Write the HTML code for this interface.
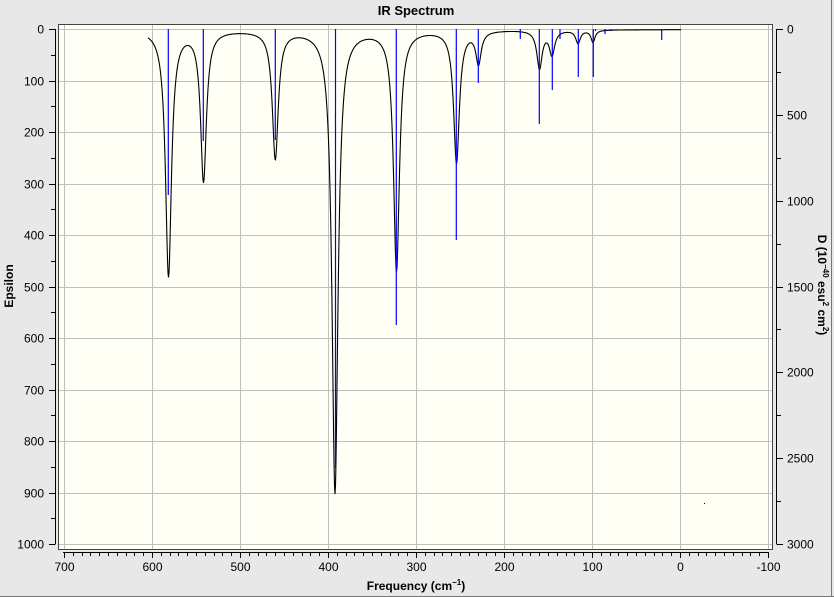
<!DOCTYPE html>
<html><head><meta charset="utf-8"><style>
html,body{margin:0;padding:0;width:834px;height:597px;overflow:hidden;background:#e8e8e8;font-family:"Liberation Sans",sans-serif;}
svg{position:absolute;left:0;top:0;}
</style></head><body>
<svg id="s" width="834" height="597" xmlns="http://www.w3.org/2000/svg" font-family="Liberation Sans, sans-serif">
<rect x="0" y="0" width="834" height="597" fill="#e8e8e8"/>
<line x1="831.5" y1="0" x2="831.5" y2="597" stroke="#777" stroke-width="1"/>
<line x1="0" y1="596.5" x2="834" y2="596.5" stroke="#777" stroke-width="1"/>
<rect x="58.5" y="24.5" width="714" height="525" fill="#fffff5" stroke="#444" stroke-width="1"/>
<g id="grid" stroke="#c0c0c0" stroke-width="1"></g>
<g id="axes" stroke="#000" stroke-width="1"></g>
<g id="labels" font-size="12" fill="#000"></g>
<path id="curve" fill="none" stroke="#000" stroke-width="1.1"/>
<g id="sticks" stroke="#0000ff" stroke-width="1.2"></g>
<text x="416" y="15" font-size="13" font-weight="bold" text-anchor="middle">IR Spectrum</text>
<text x="416" y="590" font-size="12" font-weight="bold" text-anchor="middle">Frequency (cm<tspan dy="-5" font-size="8">−1</tspan><tspan dy="5">)</tspan></text>
<text transform="translate(13,286) rotate(-90)" font-size="12" font-weight="bold" text-anchor="middle">Epsilon</text>
<text transform="translate(818,285) rotate(90)" font-size="12" font-weight="bold" text-anchor="middle">D (10<tspan dy="-5" font-size="8">−40</tspan><tspan dy="5"> esu</tspan><tspan dy="-5" font-size="8">2</tspan><tspan dy="5"> cm</tspan><tspan dy="-5" font-size="8">2</tspan><tspan dy="5">)</tspan></text>
<line x1="704" y1="503.5" x2="705" y2="503.5" stroke="#000"/>
</svg>
<script>
var NS="http://www.w3.org/2000/svg";
function el(p,t,a,txt){var e=document.createElementNS(NS,t);for(var k in a)e.setAttribute(k,a[k]);if(txt!=null)e.textContent=txt;document.getElementById(p).appendChild(e);return e;}
function fx(f){return 680-f*0.88;}
function ey(v){return 29+v*0.515;}
for(var f=700;f>=-100;f-=100){var x=Math.round(fx(f))+0.5;el("grid","line",{x1:x,y1:25,x2:x,y2:549});}
for(var v=0;v<=1000;v+=100){var y=Math.round(ey(v))+0.5;el("grid","line",{x1:59,y1:y,x2:772,y2:y});}
el("axes","line",{x1:55.5,y1:29,x2:55.5,y2:544});
for(var v=0;v<=1000;v+=50){var y=Math.round(ey(v))+0.5;el("axes","line",{x1:(v%100?51:49),y1:y,x2:55.5,y2:y});
 if(v%100==0)el("labels","text",{x:44,y:y+4,"text-anchor":"end"},String(v));}
el("axes","line",{x1:776.5,y1:29,x2:776.5,y2:544});
for(var d=0;d<=3000;d+=250){var y=Math.round(29+d*515/3000)+0.5;el("axes","line",{x1:776.5,y1:y,x2:(d%500?781:783),y2:y});
 if(d%500==0)el("labels","text",{x:787,y:y+4},String(d));}
el("axes","line",{x1:63,y1:552.5,x2:769,y2:552.5});
for(var f=700;f>=-100;f-=10){var x=Math.round(fx(f))+0.5;el("axes","line",{x1:x,y1:552.5,x2:x,y2:(f%100?556:558)});
 if(f%100==0)el("labels","text",{x:x,y:571,"text-anchor":"middle"},String(f));}
var pk=[[168.5,246,3.6],[203.5,150,3.5],[275.3,128,3.6],[335,463,3.6],[396.5,240,3.6],[456.5,132,3.5],[478.5,32,3.2],[539.5,38,3.2],[552,24,3.2],[578,13,2.8],[593,12,2.4]];
var d="";
for(var x=148;x<=681;x+=0.5){var s=0;for(var i=0;i<pk.length;i++){var t=(x-pk[i][0])/pk[i][2];s+=pk[i][1]/(1+t*t);}
 d+=(x==148?"M":"L")+x+" "+(29.5+s).toFixed(1);}
document.getElementById("curve").setAttribute("d",d);
var st=[[168.3,195],[203.3,141],[275.3,140],[335.5,468],[396.3,325],[456.3,240],[478.3,83],[520.3,39],[539.3,124],[552.3,90],[560,39],[578.3,77],[593.3,77],[595.5,31],[605,34],[611,31],[636,30],[661.7,40]];
for(var i=0;i<st.length;i++)el("sticks","line",{x1:st[i][0],y1:29,x2:st[i][0],y2:st[i][1]});
</script>
</body></html>
